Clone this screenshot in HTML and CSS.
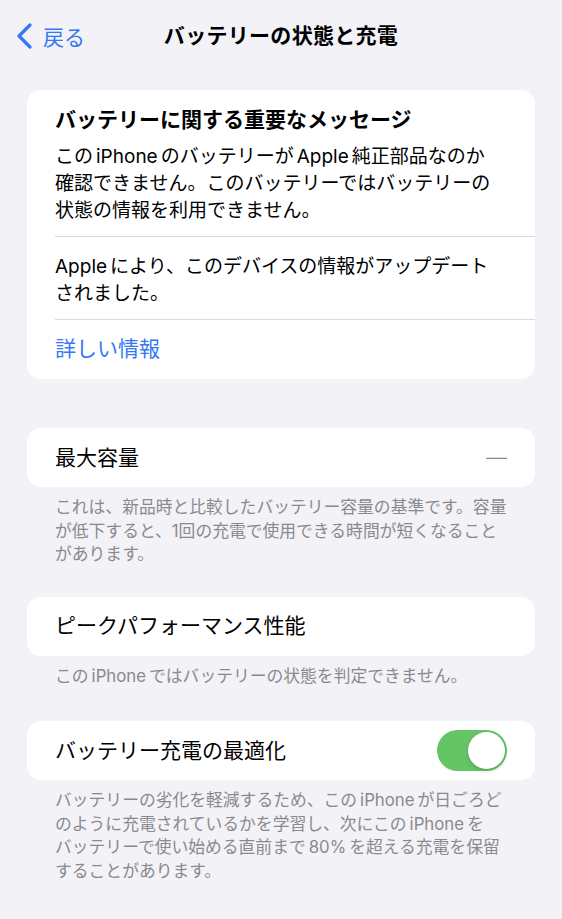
FILE: index.html
```html
<!DOCTYPE html>
<html lang="ja">
<head>
  <meta charset="UTF-8">
  <meta name="viewport" content="width=device-width, initial-scale=1">
  <title>バッテリーの状態と充電</title>
  <link rel="stylesheet" href="styles.css">
</head>
<body>
  <div class="nav">
    <a class="back" href="#">
      <svg class="chevron" width="18" height="26" viewBox="0 0 18 26">
        <path d="M14 2 L3 13 L14 24" fill="none" stroke="#3478f6" stroke-width="3.2" stroke-linecap="round" stroke-linejoin="round"/>
      </svg>
      <span>戻る</span>
    </a>
    <h1 class="nav-title">バッテリーの状態と充電</h1>
    <div></div>
  </div>

  <div class="content">
    <div class="card message">
      <div class="message-block">
        <h2>バッテリーに関する重要なメッセージ</h2>
        <p>この<span class="latin">iPhone</span>のバッテリーが<span class="latin">Apple</span>純正部品なのか<br>確認できません。このバッテリーではバッテリーの<br>状態の情報を利用できません。</p>
      </div>
      <div class="message-block">
        <p><span class="latin lead">Apple</span>により、このデバイスの情報がアップデート<br>されました。</p>
      </div>
      <div class="message-link">
        <a href="#">詳しい情報</a>
      </div>
    </div>

    <div class="section first">
      <div class="card row">
        <span class="label">最大容量</span>
        <span class="value">—</span>
      </div>
      <p class="footer">これは、新品時と比較したバッテリー容量の基準です。容量<br>が低下すると、1回の充電で使用できる時間が短くなること<br>があります。</p>
    </div>

    <div class="section">
      <div class="card row">
        <span class="label">ピークパフォーマンス性能</span>
      </div>
      <p class="footer">この<span class="latin">iPhone</span>ではバッテリーの状態を判定できません。</p>
    </div>

    <div class="section last">
      <div class="card row">
        <span class="label">バッテリー充電の最適化</span>
        <span class="toggle on"><span class="knob"></span></span>
      </div>
      <p class="footer">バッテリーの劣化を軽減するため、この<span class="latin">iPhone</span>が日ごろど<br>のように充電されているかを学習し、次にこの<span class="latin">iPhone</span>を<br>バッテリーで使い始める直前まで<span class="latin">80%</span>を超える充電を保留<br>することがあります。</p>
    </div>
  </div>
</body>
</html>
```

FILE: styles.css
```css
* {
  margin: 0;
  padding: 0;
  box-sizing: border-box;
}

body {
  background: #f2f2f7;
  font-family: Inter, "Noto Sans CJK JP", sans-serif;
  color: #000;
  height: 919px;
  overflow: hidden;
}

.nav {
  display: grid;
  grid-template-columns: 1fr auto 1fr;
  align-items: center;
  height: 72px;
  padding: 0 16px;
}

.back {
  display: flex;
  align-items: center;
  gap: 9px;
  color: #3478f6;
  text-decoration: none;
  font-size: 21px;
}

.nav-title {
  font-size: 21px;
  font-weight: 700;
  line-height: 28px;
  letter-spacing: 0.3px;
}

.content {
  padding: 18px 27px 0;
}

.card {
  background: #fff;
  border-radius: 14px;
}

/* spacing iOS puts between latin words and kana */
.latin {
  margin: 0 3px;
}

.latin.lead {
  margin-left: 0;
}

/* important message card */
.message-block {
  margin-left: 28px;
  padding: 16px 20px 12px 0;
  border-bottom: 1px solid #d9d9dc;
}

.message-block h2 {
  font-size: 21px;
  font-weight: 700;
  line-height: 28px;
  margin-bottom: 9px;
}

.message-block p {
  font-size: 19px;
  line-height: 27px;
}

.message-link {
  padding: 15px 28px 16px;
  font-size: 21px;
  line-height: 28px;
}

.message-link a {
  color: #3478f6;
  text-decoration: none;
}

/* rows */
.section {
  margin-top: 30px;
}

.section.first {
  margin-top: 49px;
}

.section.last {
  margin-top: 33px;
}

.row {
  display: flex;
  align-items: center;
  justify-content: space-between;
  height: 59px;
  padding: 0 28px;
}

.label {
  font-size: 21px;
  line-height: 28px;
}

.value {
  font-size: 21px;
  color: #8a8a8e;
  font-weight: 300;
}

.toggle {
  width: 70px;
  height: 41px;
  border-radius: 21px;
  background: #e9e9ea;
  padding: 2px;
  display: flex;
}

.toggle.on {
  background: #65c466;
  justify-content: flex-end;
}

.knob {
  width: 37px;
  height: 37px;
  border-radius: 50%;
  background: #fff;
  box-shadow: 0 2px 5px rgba(0, 0, 0, 0.15);
}

.footer {
  padding: 9px 20px 0 28px;
  font-size: 16.8px;
  line-height: 23.5px;
  color: #8a8a8e;
}
```
